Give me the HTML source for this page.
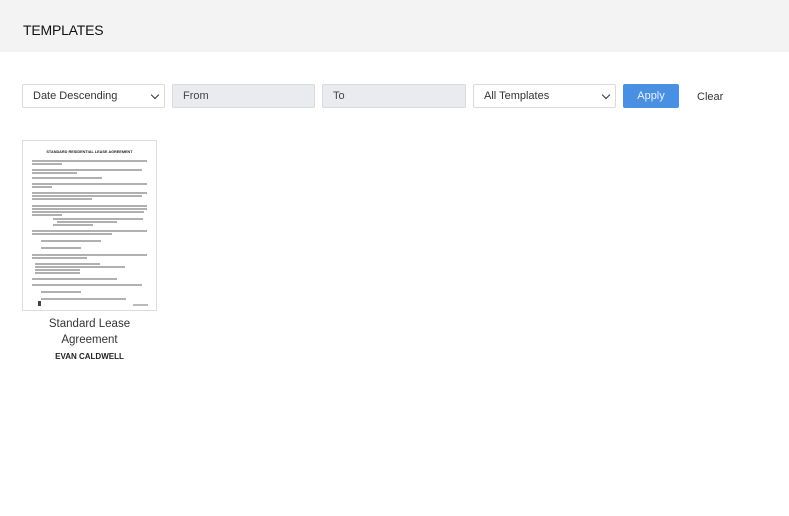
<!DOCTYPE html>
<html><head><meta charset="utf-8"><style>
*{box-sizing:border-box;margin:0;padding:0}
body{width:789px;height:516px;background:#fff;font-family:"Liberation Sans",Arial,sans-serif;position:relative;overflow:hidden}
.hdr{position:absolute;left:0;top:0;width:789px;height:52px;background:#f3f3f3}
.hdr h1{position:absolute;left:23px;top:22px;font-size:14px;font-weight:normal;color:#111;letter-spacing:-0.2px}
.ctl{position:absolute;top:84px;height:24px;border:1px solid #d8dadd;border-radius:2px;font-size:11px;color:#333;line-height:23px;padding-left:10px}
.sel{background:#fff}
.inp{background:#e9ebee;color:#444}
.chev{position:absolute;right:6px;top:7px;width:6px;height:6px;border-right:1.6px solid #333;border-bottom:1.6px solid #333;transform:rotate(45deg)}
.btn{position:absolute;left:623px;top:84px;width:56px;height:24px;background:#4a90e2;color:#e8f1fc;font-size:11px;text-align:center;line-height:25px;border-radius:2px}
.clr{position:absolute;left:697px;top:91px;font-size:11px;color:#333}
.card{position:absolute;left:22px;top:140px;width:135px;height:171px;border:1px solid #ddd;background:#fff}
.l{position:absolute;height:1.6px;background:#b0b0b0}
.t1{position:absolute;left:0;width:133px;text-align:center;top:9px;font-size:3.8px;font-weight:bold;color:#222}
.nm{position:absolute;left:22px;width:135px;text-align:center;font-size:11.5px;color:#333}
</style></head><body>
<div class="hdr"><h1>TEMPLATES</h1></div>
<div class="ctl sel" style="left:22px;width:143px">Date Descending<span class="chev"></span></div>
<div class="ctl inp" style="left:172px;width:143px">From</div>
<div class="ctl inp" style="left:322px;width:144px">To</div>
<div class="ctl sel" style="left:473px;width:143px">All Templates<span class="chev"></span></div>
<div class="btn">Apply</div>
<div class="clr">Clear</div>
<div class="card">
<div class="t1">STANDARD RESIDENTIAL LEASE AGREEMENT</div>
<div class="l" style="left:9px;top:19px;width:115px"></div><div class="l" style="left:9px;top:22px;width:30px"></div>
<div class="l" style="left:9px;top:28px;width:110px"></div><div class="l" style="left:9px;top:31px;width:45px"></div>
<div class="l" style="left:9px;top:36px;width:70px"></div>
<div class="l" style="left:9px;top:42px;width:115px"></div><div class="l" style="left:9px;top:45px;width:20px"></div>
<div class="l" style="left:9px;top:51px;width:115px"></div><div class="l" style="left:9px;top:54px;width:110px"></div><div class="l" style="left:9px;top:57px;width:60px"></div>
<div class="l" style="left:9px;top:64px;width:115px"></div><div class="l" style="left:9px;top:67px;width:115px"></div><div class="l" style="left:9px;top:70px;width:112px"></div><div class="l" style="left:9px;top:73px;width:30px"></div>
<div class="l" style="left:30px;top:77px;width:90px"></div><div class="l" style="left:34px;top:80px;width:60px"></div><div class="l" style="left:30px;top:83px;width:40px"></div>
<div class="l" style="left:9px;top:89px;width:115px"></div><div class="l" style="left:9px;top:92px;width:80px"></div>
<div class="l" style="left:18px;top:99px;width:60px"></div>
<div class="l" style="left:18px;top:106px;width:40px"></div>
<div class="l" style="left:9px;top:113px;width:115px"></div><div class="l" style="left:9px;top:116px;width:55px"></div>
<div class="l" style="left:12px;top:122px;width:65px"></div><div class="l" style="left:12px;top:125px;width:90px"></div><div class="l" style="left:12px;top:128px;width:45px"></div><div class="l" style="left:12px;top:131px;width:45px"></div>
<div class="l" style="left:9px;top:137px;width:85px"></div>
<div class="l" style="left:9px;top:143px;width:110px"></div>
<div class="l" style="left:18px;top:150px;width:40px"></div>
<div class="l" style="left:18px;top:157px;width:85px"></div>
<div class="l" style="left:110px;top:163px;width:15px;background:#bbb"></div>
<div style="position:absolute;left:15px;top:160px;width:3px;height:5px;background:#444"></div>
</div>
<div class="nm" style="top:318px">Standard Lease</div>
<div class="nm" style="top:334px">Agreement</div>
<div class="nm" style="top:352px;font-size:8px;font-weight:bold;color:#222">EVAN CALDWELL</div>
</body></html>
